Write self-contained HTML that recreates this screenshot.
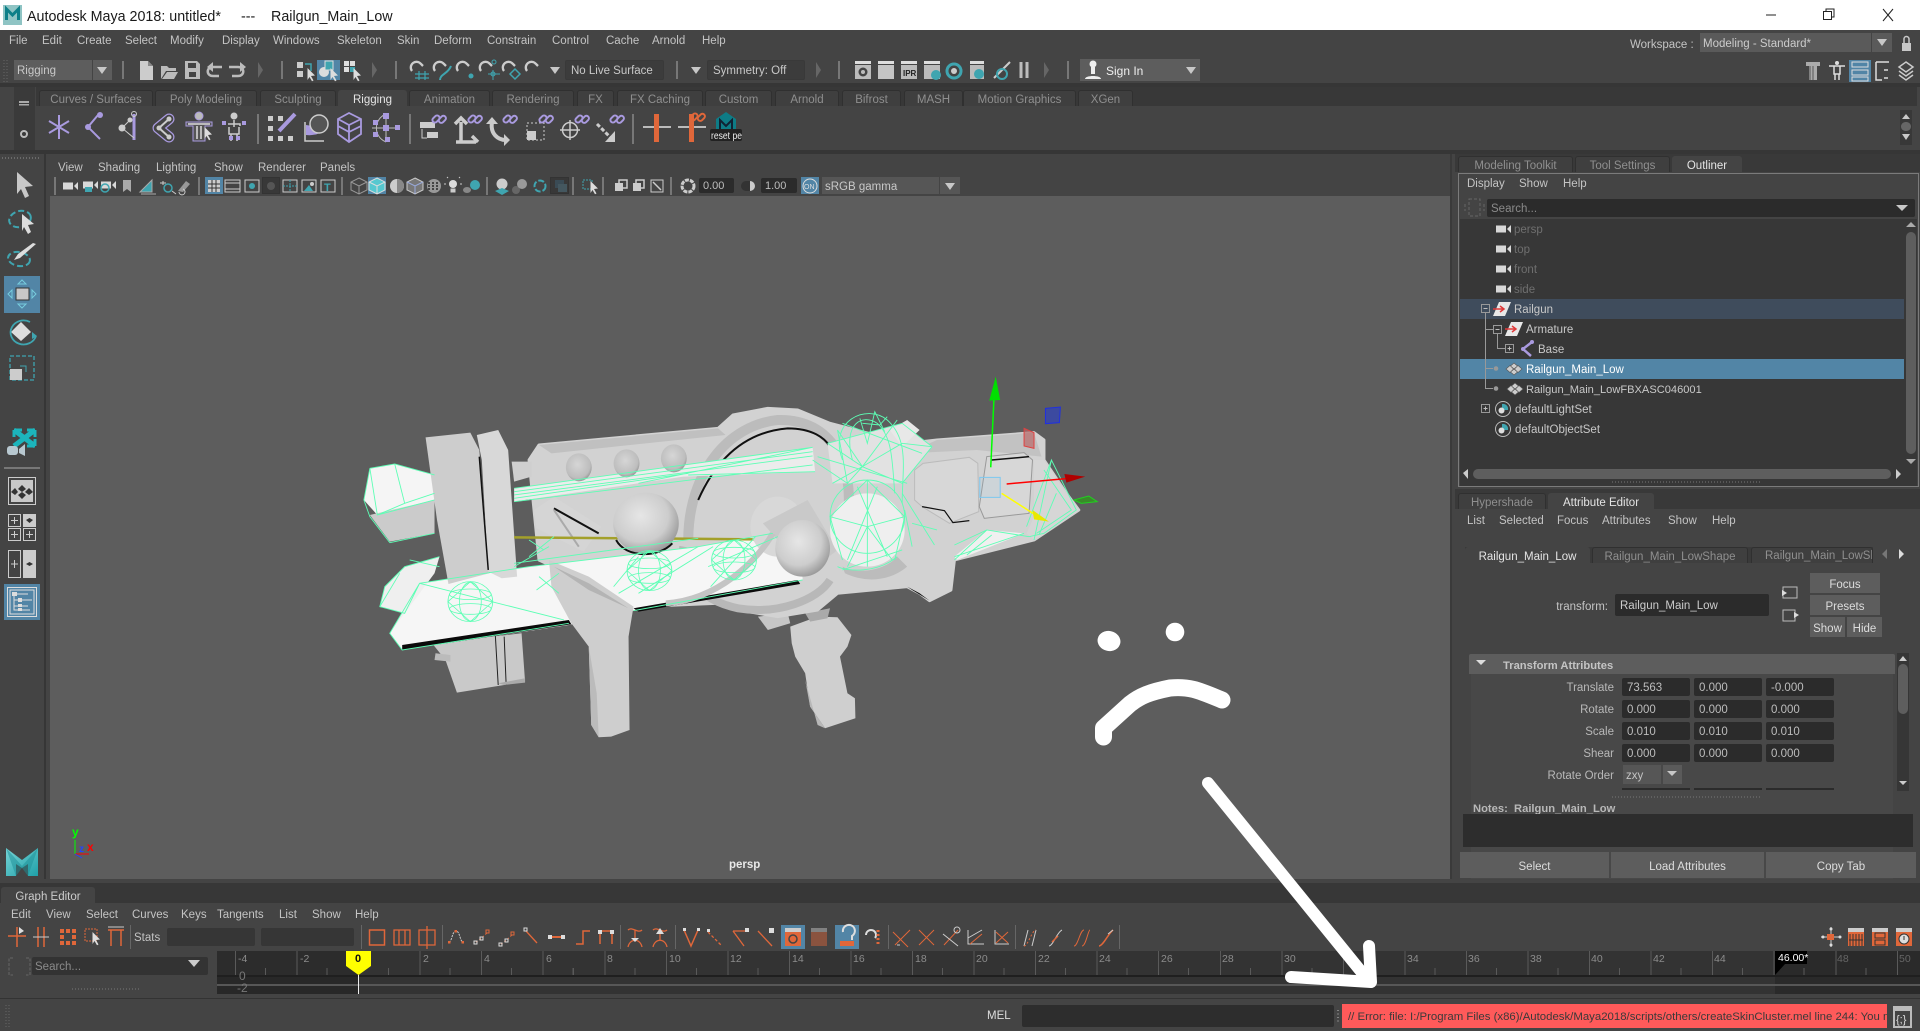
<!DOCTYPE html>
<html><head><meta charset="utf-8"><title>Autodesk Maya 2018</title>
<style>
html,body{margin:0;padding:0;background:#444;}
#p{position:relative;width:1920px;height:1031px;overflow:hidden;background:#444;font-family:"Liberation Sans",Arial,sans-serif;font-size:11.5px;color:#c4c4c4;}
#p div{position:absolute;box-sizing:border-box;}
.t{position:absolute;white-space:nowrap;line-height:14px;height:14px;margin-top:1px;}
.c{display:flex;align-items:center;justify-content:center;white-space:nowrap;padding-top:2px;}
.tab{background:#3f3f3f;color:#8f8f8f;border:1px solid #303030;border-bottom:0;border-radius:3px 3px 0 0;}
.on{background:#444;color:#e4e4e4;border-color:#444;}
.f{background:#2b2b2b;border-radius:2px;padding-left:5px;padding-top:1px;line-height:17px;color:#bdbdbd;}
.b{background:#5d5d5d;color:#ddd;}
.b.c{padding-top:3px;}
.r{text-align:right;color:#b8b8b8;}
svg{position:absolute;left:0;top:0;}
.gun *{vector-effect:non-scaling-stroke;}
</style></head><body><div id="p">

<!-- title bar -->
<div style="left:0;top:0;width:1920px;height:30px;background:#fff"></div>
<div style="left:3px;top:5px;width:19px;height:20px;background:#8fc4c4"></div>
<span class="t" style="left:27px;top:9px;font-size:14.3px;color:#1a1a1a">Autodesk Maya 2018: untitled*</span>
<span class="t" style="left:241px;top:9px;font-size:14.3px;color:#1a1a1a">---</span>
<span class="t" style="left:271px;top:9px;font-size:14.3px;color:#1a1a1a">Railgun_Main_Low</span>

<!-- menu -->
<span class="t" style="left:9px;top:33px">File</span><span class="t" style="left:42px;top:33px">Edit</span><span class="t" style="left:77px;top:33px">Create</span><span class="t" style="left:125px;top:33px">Select</span><span class="t" style="left:170px;top:33px">Modify</span><span class="t" style="left:222px;top:33px">Display</span><span class="t" style="left:273px;top:33px">Windows</span><span class="t" style="left:337px;top:33px">Skeleton</span><span class="t" style="left:397px;top:33px">Skin</span><span class="t" style="left:434px;top:33px">Deform</span><span class="t" style="left:487px;top:33px">Constrain</span><span class="t" style="left:552px;top:33px">Control</span><span class="t" style="left:606px;top:33px">Cache</span><span class="t" style="left:652px;top:33px">Arnold</span><span class="t" style="left:702px;top:33px">Help</span>
<span class="t" style="left:1630px;top:37px">Workspace :</span>
<div style="left:1700px;top:33px;width:171px;height:19px;background:#5a5a5a;padding-left:3px;line-height:23px;color:#ccc;white-space:nowrap">Modeling - Standard*</div>
<div style="left:1872px;top:33px;width:20px;height:19px;background:#5a5a5a"></div>

<!-- status line -->
<div style="left:14px;top:60px;width:78px;height:20px;background:#5d5d5d;padding-left:3px;line-height:22px;color:#c8c8c8">Rigging</div>
<div style="left:93px;top:60px;width:19px;height:20px;background:#5d5d5d"></div>
<div style="left:317px;top:60px;width:23px;height:20px;background:#5285a6"></div>
<div class="f" style="left:565px;top:60px;width:99px;height:20px;background:#3c3c3c;border:1px solid #393939;line-height:18px;color:#c8c8c8;white-space:nowrap">No Live Surface</div>
<div class="f" style="left:707px;top:60px;width:98px;height:20px;background:#3c3c3c;border:1px solid #393939;line-height:18px;color:#c8c8c8;white-space:nowrap">Symmetry: Off</div>
<div style="left:1080px;top:59px;width:120px;height:22px;background:#5d5d5d"></div>
<span class="t" style="left:1106px;top:63px;color:#eee;font-size:12px">Sign In</span>
<div style="left:1849px;top:60px;width:22px;height:22px;background:#5285a6"></div>

<!-- shelf -->
<div style="left:0;top:83px;width:1920px;height:4px;background:#363636"></div>
<div style="left:36px;top:87px;width:1881px;height:19px;background:#383838"></div>
<div style="left:14px;top:87px;width:21px;height:63px;background:#3a3a3a"></div>
<div style="left:1917px;top:87px;width:3px;height:63px;background:#444"></div>
<div class="tab c" style="left:39px;top:90px;width:114px;height:16px">Curves / Surfaces</div>
<div class="tab c" style="left:155px;top:90px;width:102px;height:16px">Poly Modeling</div>
<div class="tab c" style="left:260px;top:90px;width:76px;height:16px">Sculpting</div>
<div class="tab on c" style="left:338px;top:90px;width:69px;height:16px">Rigging</div>
<div class="tab c" style="left:409px;top:90px;width:81px;height:16px">Animation</div>
<div class="tab c" style="left:492px;top:90px;width:82px;height:16px">Rendering</div>
<div class="tab c" style="left:577px;top:90px;width:37px;height:16px">FX</div>
<div class="tab c" style="left:617px;top:90px;width:86px;height:16px">FX Caching</div>
<div class="tab c" style="left:705px;top:90px;width:67px;height:16px">Custom</div>
<div class="tab c" style="left:775px;top:90px;width:64px;height:16px">Arnold</div>
<div class="tab c" style="left:842px;top:90px;width:59px;height:16px">Bifrost</div>
<div class="tab c" style="left:904px;top:90px;width:59px;height:16px">MASH</div>
<div class="tab c" style="left:963px;top:90px;width:113px;height:16px">Motion Graphics</div>
<div class="tab c" style="left:1078px;top:90px;width:55px;height:16px">XGen</div>
<div style="left:1900px;top:110px;width:12px;height:35px;background:#383838"></div>
<div style="left:0;top:150px;width:1920px;height:4px;background:#363636"></div>

<!-- left toolbox -->
<div style="left:44px;top:154px;width:2px;height:730px;background:#363636"></div>
<div style="left:4px;top:276px;width:36px;height:37px;background:#5285a6"></div>
<div style="left:4px;top:467px;width:36px;height:2px;background:#777"></div>
<div style="left:4px;top:584px;width:36px;height:36px;background:#5285a6"></div>

<!-- viewport panel -->
<span class="t" style="left:58px;top:160px">View</span><span class="t" style="left:98px;top:160px">Shading</span><span class="t" style="left:156px;top:160px">Lighting</span><span class="t" style="left:214px;top:160px">Show</span><span class="t" style="left:258px;top:160px">Renderer</span><span class="t" style="left:320px;top:160px">Panels</span>
<div style="left:205px;top:177px;width:18px;height:17px;background:#5285a6"></div>
<div style="left:262px;top:177px;width:18px;height:17px;background:#383838;border:1px solid #333"></div>
<div style="left:368px;top:177px;width:18px;height:17px;background:#5285a6"></div>
<div style="left:550px;top:177px;width:19px;height:17px;background:#383838;border:1px solid #333"></div>
<div class="f" style="left:699px;top:178px;width:35px;height:15px;line-height:15px;padding-left:4px;font-size:11px">0.00</div>
<div class="f" style="left:761px;top:178px;width:36px;height:15px;line-height:15px;padding-left:4px;font-size:11px">1.00</div>
<div style="left:801px;top:177px;width:18px;height:17px;background:#5285a6"></div>
<div style="left:822px;top:177px;width:117px;height:17px;background:#565656;padding-left:3px;line-height:20px;color:#c8c8c8">sRGB gamma</div>
<div style="left:940px;top:177px;width:20px;height:17px;background:#565656"></div>
<div style="left:50px;top:196px;width:1400px;height:683px;background:#5d5d5d"></div>
<div style="left:1450px;top:154px;width:2px;height:730px;background:#3a3a3a"></div>
<span class="t" style="left:729px;top:857px;color:#e8e8e8;font-weight:bold;font-size:11.5px">persp</span>

<!-- right panels -->
<div style="left:1455px;top:154px;width:465px;height:18px;background:#393939"></div>
<div class="tab c" style="left:1458px;top:156px;width:115px;height:16px">Modeling Toolkit</div>
<div class="tab c" style="left:1575px;top:156px;width:95px;height:16px">Tool Settings</div>
<div class="tab on c" style="left:1672px;top:156px;width:70px;height:17px">Outliner</div>
<div style="left:1458px;top:173px;width:461px;height:314px;border:1px solid #7b7b7b"></div>
<span class="t" style="left:1467px;top:176px">Display</span><span class="t" style="left:1519px;top:176px">Show</span><span class="t" style="left:1563px;top:176px">Help</span>
<div style="left:1487px;top:199px;width:428px;height:18px;background:#2b2b2b;border-radius:2px;color:#8a8a8a;padding-left:4px;line-height:20px">Search...</div>
<div style="left:1460px;top:219px;width:457px;height:267px;background:#373737"></div>
<div style="left:1460px;top:299px;width:444px;height:20px;background:#3f4c5c"></div>
<div style="left:1460px;top:359px;width:444px;height:20px;background:#5285a6"></div>
<div style="left:1906px;top:232px;width:10px;height:222px;background:#5e5e5e;border-radius:5px"></div>
<div style="left:1473px;top:469px;width:418px;height:10px;background:#5e5e5e;border-radius:5px"></div>
<span class="t" style="left:1514px;top:222px;color:#6f6f6f">persp</span>
<span class="t" style="left:1514px;top:242px;color:#6f6f6f">top</span>
<span class="t" style="left:1514px;top:262px;color:#6f6f6f">front</span>
<span class="t" style="left:1514px;top:282px;color:#6f6f6f">side</span>
<span class="t" style="left:1514px;top:302px;color:#c8c8c8">Railgun</span>
<span class="t" style="left:1526px;top:322px;color:#c8c8c8">Armature</span>
<span class="t" style="left:1538px;top:342px;color:#c8c8c8">Base</span>
<span class="t" style="left:1526px;top:362px;color:#fff">Railgun_Main_Low</span>
<span class="t" style="left:1526px;top:382px;color:#c8c8c8;font-size:11.1px">Railgun_Main_LowFBXASC046001</span>
<span class="t" style="left:1515px;top:402px;color:#c8c8c8">defaultLightSet</span>
<span class="t" style="left:1515px;top:422px;color:#c8c8c8">defaultObjectSet</span>

<div style="left:1455px;top:489px;width:465px;height:20px;background:#393939"></div>
<div class="tab c" style="left:1458px;top:493px;width:88px;height:16px">Hypershade</div>
<div class="tab on c" style="left:1548px;top:493px;width:106px;height:17px">Attribute Editor</div>
<span class="t" style="left:1467px;top:513px">List</span><span class="t" style="left:1499px;top:513px">Selected</span><span class="t" style="left:1557px;top:513px">Focus</span><span class="t" style="left:1602px;top:513px">Attributes</span><span class="t" style="left:1668px;top:513px">Show</span><span class="t" style="left:1712px;top:513px">Help</span>
<div style="left:1465px;top:547px;width:408px;height:16px;background:#3a3a3a"></div>
<div class="tab on c" style="left:1465px;top:547px;width:125px;height:17px">Railgun_Main_Low</div>
<div class="tab c" style="left:1592px;top:547px;width:156px;height:16px">Railgun_Main_LowShape</div>
<div class="tab" style="left:1751px;top:547px;width:122px;height:16px;overflow:hidden;padding-left:13px;line-height:17px;white-space:nowrap">Railgun_Main_LowShape</div>
<span class="t r" style="left:1540px;width:68px;top:599px;color:#c4c4c4">transform:</span>
<div class="f" style="left:1615px;top:594px;width:154px;height:22px;line-height:22px;color:#ccc">Railgun_Main_Low</div>
<div class="b c" style="left:1810px;top:573px;width:70px;height:20px">Focus</div>
<div class="b c" style="left:1810px;top:595px;width:70px;height:20px">Presets</div>
<div class="b c" style="left:1810px;top:617px;width:35px;height:20px">Show</div>
<div class="b c" style="left:1847px;top:617px;width:35px;height:20px">Hide</div>
<div style="left:1469px;top:654px;width:426px;height:20px;background:#5d5d5d;border-radius:2px 2px 0 0"></div>
<span class="t" style="left:1503px;top:658px;font-weight:bold;color:#c4c4c4;font-size:11.2px">Transform Attributes</span>
<div style="left:1471px;top:674px;width:422px;height:227px;background:#484848"></div>
<span class="t r" style="left:1540px;width:74px;top:680px">Translate</span>
<span class="t r" style="left:1540px;width:74px;top:702px">Rotate</span>
<span class="t r" style="left:1540px;width:74px;top:724px">Scale</span>
<span class="t r" style="left:1540px;width:74px;top:746px">Shear</span>
<span class="t r" style="left:1540px;width:74px;top:768px">Rotate Order</span>
<div class="f" style="left:1622px;top:678px;width:68px;height:18px;line-height:19px">73.563</div><div class="f" style="left:1694px;top:678px;width:68px;height:18px;line-height:19px">0.000</div><div class="f" style="left:1766px;top:678px;width:68px;height:18px;line-height:19px">-0.000</div>
<div class="f" style="left:1622px;top:700px;width:68px;height:18px;line-height:19px">0.000</div><div class="f" style="left:1694px;top:700px;width:68px;height:18px;line-height:19px">0.000</div><div class="f" style="left:1766px;top:700px;width:68px;height:18px;line-height:19px">0.000</div>
<div class="f" style="left:1622px;top:722px;width:68px;height:18px;line-height:19px">0.010</div><div class="f" style="left:1694px;top:722px;width:68px;height:18px;line-height:19px">0.010</div><div class="f" style="left:1766px;top:722px;width:68px;height:18px;line-height:19px">0.010</div>
<div class="f" style="left:1622px;top:744px;width:68px;height:18px;line-height:19px">0.000</div><div class="f" style="left:1694px;top:744px;width:68px;height:18px;line-height:19px">0.000</div><div class="f" style="left:1766px;top:744px;width:68px;height:18px;line-height:19px">0.000</div>
<div style="left:1623px;top:765px;width:38px;height:19px;background:#565656;padding-left:3px;line-height:23px">zxy</div>
<div style="left:1663px;top:765px;width:19px;height:19px;background:#5a5a5a"></div>
<div style="left:1622px;top:788px;width:68px;height:2px;background:#2b2b2b"></div><div style="left:1694px;top:788px;width:68px;height:2px;background:#2b2b2b"></div><div style="left:1766px;top:788px;width:68px;height:2px;background:#2b2b2b"></div>
<div style="left:1897px;top:653px;width:12px;height:138px;background:#363636"></div>
<div style="left:1898px;top:664px;width:10px;height:50px;background:#5e5e5e;border-radius:5px"></div>
<span class="t" style="left:1473px;top:801px;font-weight:bold;color:#b8b8b8;font-size:11.2px">Notes:&nbsp; Railgun_Main_Low</span>
<div style="left:1463px;top:814px;width:450px;height:33px;background:#2d2d2d"></div>
<div class="b c" style="left:1460px;top:852px;width:149px;height:26px">Select</div>
<div class="b c" style="left:1611px;top:852px;width:153px;height:26px">Load Attributes</div>
<div class="b c" style="left:1766px;top:852px;width:150px;height:26px">Copy Tab</div>

<!-- graph editor -->
<div style="left:0;top:879px;width:1920px;height:4px;background:#444"></div>
<div style="left:0;top:883px;width:1920px;height:20px;background:#373737"></div>
<div class="tab on c" style="left:1px;top:887px;width:94px;height:17px;color:#ccc">Graph Editor</div>
<span class="t" style="left:11px;top:907px">Edit</span><span class="t" style="left:46px;top:907px">View</span><span class="t" style="left:86px;top:907px">Select</span><span class="t" style="left:132px;top:907px">Curves</span><span class="t" style="left:181px;top:907px">Keys</span><span class="t" style="left:217px;top:907px">Tangents</span><span class="t" style="left:279px;top:907px">List</span><span class="t" style="left:312px;top:907px">Show</span><span class="t" style="left:355px;top:907px">Help</span>
<span class="t" style="left:134px;top:930px">Stats</span>
<div style="left:167px;top:928px;width:88px;height:18px;background:#363636;border-radius:2px"></div>
<div style="left:261px;top:928px;width:93px;height:18px;background:#363636;border-radius:2px"></div>
<div style="left:781px;top:925px;width:24px;height:24px;background:#5285a6"></div>
<div style="left:835px;top:925px;width:24px;height:24px;background:#5285a6"></div>
<div style="left:32px;top:957px;width:176px;height:18px;background:#333;border-radius:2px;color:#8a8a8a;padding-left:3px;line-height:20px">Search...</div>

<!-- time slider -->
<div style="left:217px;top:951px;width:1703px;height:43px;background:#333"></div>
<div style="left:217px;top:951px;width:141px;height:24px;background:#2c2c2c"></div>
<div style="left:217px;top:977px;width:141px;height:17px;background:#282828"></div>
<div style="left:1775px;top:951px;width:145px;height:43px;background:#2a2a2a"></div>
<div style="left:235px;top:951px;width:1685px;height:24px;background:repeating-linear-gradient(90deg,#5a5a5a 0 1px,transparent 1px 61.55px)"></div>
<div style="left:265px;top:968px;width:1655px;height:7px;background:repeating-linear-gradient(90deg,#5a5a5a 0 1px,transparent 1px 61.55px)"></div>
<div style="left:217px;top:975px;width:1703px;height:2px;background:#1f1f1f"></div>
<div style="left:217px;top:984px;width:1703px;height:2px;background:#575757"></div>
<div style="left:0;top:994px;width:1920px;height:5px;background:#444"></div>
<div style="left:0;top:998px;width:1920px;height:1px;background:#333"></div>
<div style="left:1775px;top:951px;width:32px;height:13px;background:#000;color:#fff;font-size:10.5px;line-height:15px;padding-left:3px;white-space:nowrap">46.00*</div>

<!-- command line -->
<span class="t" style="left:987px;top:1008px;color:#ddd">MEL</span>
<div style="left:1022px;top:1005px;width:312px;height:22px;background:#2d2d2d;border-radius:2px"></div>
<div style="left:1342px;top:1004px;width:545px;height:24px;background:#ff5a5a;overflow:hidden;color:#3a3a3a;font-size:11.4px;line-height:26px;padding-left:6px;white-space:nowrap">// Error: file: I:/Program Files (x86)/Autodesk/Maya2018/scripts/others/createSkinCluster.mel line 244: You must select a skin</div>

<!-- ALL ICONS + VIEWPORT CONTENT -->
<svg width="1920" height="1031" viewBox="0 0 1920 1031" font-family="'Liberation Sans',Arial,sans-serif">
<defs>
<radialGradient id="sph" cx=".42" cy=".38" r=".7"><stop offset="0" stop-color="#e6e6e6"/><stop offset=".6" stop-color="#cdcdcd"/><stop offset="1" stop-color="#8c8c8c"/></radialGradient>
<radialGradient id="knob" cx=".45" cy=".4" r=".7"><stop offset="0" stop-color="#d6d6d6"/><stop offset=".7" stop-color="#bdbdbd"/><stop offset="1" stop-color="#7a7a7a"/></radialGradient>
<linearGradient id="mlogo" x1="0" y1="0" x2="1" y2="1"><stop offset="0" stop-color="#78d4d6"/><stop offset="1" stop-color="#1fa0a8"/></linearGradient>
<g id="sep"><rect x="-1" y="-9" width="2" height="18" fill="#777"/></g>
<g id="hs"><path d="M-2,-8L3,0L-2,8Z" fill="#666"/></g>
<g id="tri"><path d="M-5,-3H5L0,4Z" fill="#c8c8c8"/></g>
<g id="arr"><path d="M-2.500,-6L5,1.500L1,2L3.500,6.500L2,7.300L-.5,3L-2.500,6Z" fill="#ddd"/></g>
<g id="link"><rect x="-7" y="-3.500" width="8" height="5" rx="2.500" transform="rotate(-45 -3 -1)" fill="none" stroke="#a99adf" stroke-width="2"/><rect x="-1" y="-3" width="8" height="5" rx="2.500" transform="rotate(-45 3 -1)" fill="none" stroke="#a99adf" stroke-width="2"/></g>
<g id="cam"><rect x="-7" y="-3.500" width="10" height="7" fill="#d8d8d8"/><path d="M4,0L8,-4V4Z" fill="#d8d8d8"/></g>
<g id="mesh"><path d="M0,-6L3.500,-3L0,0L-3.500,-3ZM0,0L3.500,3L0,6L-3.500,3ZM-4,-3.500L-.5,0L-4,3.500L-8,0ZM4,-3.500L8,0L4,3.500L.5,0Z" fill="#ccc" stroke="#555" stroke-width=".6"/></g>
<g id="xf"><path d="M-3,-7H9L3,7H-9Z" fill="#e8e8e8"/><path d="M-9,0H2M-2,-3L2,0L-2,3" stroke="#e03a3a" stroke-width="1.500" fill="none"/></g>
<g id="set"><circle r="7.500" fill="none" stroke="#bbb" stroke-width="1"/><path d="M-1,-5A5,5 0 0 1 5,1H-1Z" fill="#3fa5b0"/><circle cx="-1.500" cy="1.500" r="3" fill="#ddd"/></g>
<g id="box"><rect x="-4" y="-4" width="8" height="8" fill="none" stroke="#999"/><path d="M-2,0H2" stroke="#bbb"/></g>
<g id="boxp"><rect x="-4" y="-4" width="8" height="8" fill="none" stroke="#999"/><path d="M-2,0H2M0,-2V2" stroke="#bbb"/></g>
<g id="snap"><path d="M-6,3A5.500,5.500 0 1 1 3,-4L5,-2" stroke="#ccc" stroke-width="2.300" fill="none"/></g>
<g id="ot2"><path d="M-7,5C-4,5-4,-6,0,-6S4,5,7,5" stroke="#ccc" stroke-width="1" stroke-dasharray="2 1" fill="none"/><rect x="-8" y="4" width="2.500" height="2.500" fill="#e0673a"/><rect x="5.500" y="4" width="2.500" height="2.500" fill="#e0673a"/><rect x="-1.500" y="-7" width="2.500" height="2.500" fill="#e0673a"/></g>
<g id="ot3"><path d="M-6,5L-1,1.500L6,-5" stroke="#e0673a" stroke-width="1" stroke-dasharray="2 2" fill="none"/><rect x="-8" y="4" width="3" height="3" fill="none" stroke="#ddd"/><rect x="-2" y="0" width="3" height="3" fill="none" stroke="#ddd"/><rect x="4" y="-7" width="3" height="3" fill="none" stroke="#e0673a"/></g>
<g id="wsq"><rect x="-8" y="-9" width="16" height="18" fill="#e0673a"/><rect x="-8" y="-9" width="16" height="4" fill="#ccc"/></g>
</defs>

<!-- window controls -->
<path d="M1766,15H1776" stroke="#222" stroke-width="1"/>
<path d="M1823.500,11.500H1831.500V19.500H1823.500ZM1826,11V9H1834V17H1832" stroke="#222" fill="none"/>
<path d="M1883,9L1893,21M1893,9L1883,21" stroke="#222" fill="none"/>
<path d="M6.500,20V9L12.500,15L18.500,9V20" stroke="#0d7f88" stroke-width="3" fill="none"/>

<!-- workspace arrow / lock -->
<use href="#tri" x="1882" y="42"/>
<rect x="1902" y="43" width="9" height="8" fill="#c8c8c8"/><path d="M1904,43V39A2.500,2.500 0 0 1 1909,39V43" stroke="#c8c8c8" stroke-width="1.500" fill="none"/>
<!-- status line handles -->
<path d="M4,60V82M7,60V82" stroke="#666" stroke-dasharray="1 2"/>
<use href="#tri" x="102" y="70"/>
<use href="#sep" x="123" y="70"/>
<path d="M140,61H148L153,66V80H140Z" fill="#ccc"/><path d="M148,61V66H153" fill="#888"/>
<path d="M161,66H167L169,68H176V71H166L161,79ZM162,79L167,72H178L174,79Z" fill="#bbb"/>
<path d="M185,61H197L200,64V79H185Z" fill="#bbb"/><rect x="188" y="63" width="8" height="5" fill="#444"/><rect x="189" y="72" width="7" height="5" fill="#444"/>
<path d="M219,76H213C206,76 206,67 213,67H222" stroke="#bbb" stroke-width="2.500" fill="none"/><path d="M213,62L207,67L213,72Z" fill="#bbb"/>
<path d="M232,76H238C245,76 245,67 238,67H229" stroke="#bbb" stroke-width="2.500" fill="none"/><path d="M240,62L246,67L240,72Z" fill="#bbb"/>
<use href="#hs" x="260" y="70"/><use href="#sep" x="282" y="70"/>
<g fill="#ccc"><rect x="297" y="62" width="6" height="6"/><rect x="297" y="71" width="6" height="6"/></g><path d="M305,64H311V71" stroke="#3fa5b0" stroke-width="1.500" fill="none"/><use href="#arr" x="310" y="74"/>
<circle cx="324" cy="72" r="5" fill="#ddd"/><rect x="325" y="61" width="8" height="9" fill="#3fa5b0" stroke="#ddd"/><use href="#arr" x="333" y="74"/>
<g fill="#ddd"><rect x="344" y="61" width="5" height="5"/><rect x="350" y="61" width="5" height="5"/><rect x="344" y="67" width="5" height="5"/></g><rect x="350" y="67" width="5" height="5" fill="#3fa5b0"/><use href="#arr" x="356" y="74"/>
<use href="#hs" x="374" y="70"/><use href="#sep" x="396" y="70"/>
<use href="#snap" x="418" y="68"/><path d="M419,71V80M425,71V80M415,74H429M415,78H429" stroke="#3fa5b0" stroke-width="1.200"/>
<use href="#snap" x="441" y="68"/><path d="M440,80C440,74 448,74 451,66" stroke="#3fa5b0" stroke-width="2" fill="none"/>
<use href="#snap" x="464" y="68"/><circle cx="471" cy="76" r="2.500" fill="#3fa5b0"/>
<use href="#snap" x="487" y="68"/><circle cx="494" cy="62" r="2" fill="none" stroke="#3fa5b0"/><circle cx="493" cy="74" r="2" fill="none" stroke="#3fa5b0"/><path d="M493,70V80M488,74H500" stroke="#3fa5b0"/>
<use href="#snap" x="510" y="68"/><path d="M510,74L515,69L520,74L515,79Z" fill="none" stroke="#3fa5b0" stroke-width="1.500"/>
<use href="#snap" x="533" y="68"/>
<use href="#tri" x="555" y="70"/><use href="#sep" x="677" y="70"/><use href="#tri" x="696" y="70"/><use href="#hs" x="818" y="70"/><use href="#sep" x="839" y="70"/>
<g><rect x="855" y="61" width="16" height="3" fill="#ddd"/><rect x="855" y="65" width="16" height="14" fill="#bbb"/><circle cx="863" cy="72" r="4.500" fill="#444"/><circle cx="863" cy="72" r="2" fill="#bbb"/></g>
<g><rect x="878" y="61" width="16" height="3" fill="#ddd"/><rect x="878" y="65" width="16" height="14" fill="#c4c4c4"/></g>
<g><rect x="901" y="61" width="16" height="3" fill="#ddd"/><rect x="901" y="65" width="16" height="14" fill="#bbb"/><text x="903" y="76" font-size="8" fill="#222" font-weight="bold">IPR</text></g>
<g><rect x="924" y="61" width="16" height="3" fill="#ddd"/><rect x="924" y="65" width="16" height="14" fill="#bbb"/><circle cx="936" cy="75" r="5" fill="#3fa5b0"/></g>
<circle cx="954" cy="71" r="7" fill="none" stroke="#3fa5b0" stroke-width="3"/><circle cx="954" cy="71" r="3" fill="#ccc"/>
<g><rect x="970" y="61" width="14" height="3" fill="#ddd"/><rect x="970" y="65" width="14" height="14" fill="#bbb"/><circle cx="979" cy="74" r="5" fill="#3fa5b0"/></g>
<path d="M994,78L1010,62" stroke="#ccc" stroke-width="2"/><circle cx="1002" cy="74" r="5" fill="none" stroke="#3fa5b0" stroke-width="2"/>
<path d="M1021,62V78M1027,62V78" stroke="#bbb" stroke-width="3"/>
<use href="#hs" x="1046" y="70"/><use href="#sep" x="1068" y="70"/>
<circle cx="1093" cy="64" r="3.500" fill="#eee"/><path d="M1091,67H1095V74H1091ZM1085,79C1085,75 1101,75 1101,79Z" fill="#eee"/>
<use href="#tri" x="1191" y="70"/>
<!-- right layout icons -->
<path d="M1806,62H1820V66H1817V80H1809V66H1806Z" fill="#aaa"/><path d="M1810,66V80M1813,66V80" stroke="#555"/>
<circle cx="1837" cy="63" r="2" fill="#ddd"/><path d="M1829,66H1845M1834,66H1840V74H1834ZM1835,74V80M1839,74V80" stroke="#ddd" stroke-width="1.500" fill="none"/>
<path d="M1852,62H1868V67H1852ZM1852,70H1868V75H1852ZM1852,77H1868V81H1852Z" fill="none" stroke="#ddd"/>
<path d="M1876,62H1889M1876,62V80H1882M1884,70H1888M1884,78H1888" stroke="#ddd" stroke-width="1.500" fill="none"/>
<path d="M1906,62L1913,67L1906,72L1899,67ZM1899,71L1906,76L1913,71M1899,75L1906,80L1913,75" fill="none" stroke="#ccc" stroke-width="1.500"/>

<!-- shelf -->
<rect x="19" y="101" width="10" height="2" fill="#aaa"/><rect x="19" y="104" width="10" height="1.500" fill="#aaa"/>
<circle cx="24" cy="134" r="3" fill="none" stroke="#bbb" stroke-width="2"/>
<path d="M1906,114L1902,119H1910ZM1906,140L1902,134H1910Z" fill="#c8c8c8"/><rect x="1901" y="122" width="10" height="9" rx="4.500" fill="#666"/>
<path d="M59,115V139M49,121L69,133M69,121L49,133" stroke="#a99adf" stroke-width="2"/>
<g fill="#a99adf"><circle cx="100" cy="115" r="3"/><circle cx="88" cy="127" r="3"/><path d="M98,115L88,127L100,139" fill="none" stroke="#a99adf" stroke-width="2"/></g>
<g><path d="M134,114V140" stroke="#a99adf" stroke-width="3"/><circle cx="134" cy="114" r="2.500" fill="none" stroke="#ccc"/><circle cx="122" cy="128" r="3.500" fill="#ccc"/><circle cx="130" cy="120" r="2.500" fill="#ccc"/><path d="M122,128L130,120M122,128L134,138" stroke="#ccc"/></g>
<path d="M169,119L158,128L169,137" fill="none" stroke="#a99adf" stroke-width="11" stroke-linejoin="round" stroke-linecap="round"/><path d="M169,119L158,128L169,137" fill="none" stroke="#444" stroke-width="8.500" stroke-linejoin="round" stroke-linecap="round"/><path d="M169,119L159,128L169,137" fill="none" stroke="#ccc" stroke-width="2"/><circle cx="169" cy="119" r="2.500" fill="#ccc"/><circle cx="159" cy="128" r="2.500" fill="#ccc"/><circle cx="169" cy="137" r="2.500" fill="#ccc"/>
<circle cx="199" cy="116" r="4" fill="#bbb" stroke="#a99adf"/><path d="M186,122H212V126H205V141H193V126H186Z" fill="#555" stroke="#a99adf"/><path d="M188,124H210M197,126V139M201,126V139" stroke="#bbb" stroke-width="2"/><use href="#arr" x="207" y="133"/>
<circle cx="234" cy="116" r="3.500" fill="#ccc"/><path d="M234,120V127M228,124H240V126M229,127V134H239V127M231,134V141M237,134V141" fill="none" stroke="#ccc" stroke-width="1.500"/><rect x="222" y="121" width="4" height="4" fill="#a99adf"/><rect x="242" y="121" width="4" height="4" fill="#a99adf"/><rect x="229" y="136" width="4" height="4" fill="#a99adf"/><rect x="236" y="136" width="4" height="4" fill="#a99adf"/>
<rect x="257" y="114" width="2" height="30" fill="#777"/>
<g fill="#ccc"><rect x="268" y="116" width="5" height="5"/><rect x="278" y="116" width="5" height="5"/><rect x="268" y="126" width="5" height="5"/><rect x="268" y="136" width="5" height="5"/><rect x="278" y="136" width="5" height="5"/><rect x="288" y="136" width="5" height="5"/></g><path d="M279,131L295,114" stroke="#a99adf" stroke-width="4"/>
<path d="M305,122V141H324" fill="none" stroke="#ccc" stroke-width="1.500"/><path d="M306,125V135C315,136 322,133 325,128Z" fill="#a99adf"/><circle cx="319" cy="124" r="9" fill="#555" stroke="#ccc" stroke-width="1.500"/>
<path d="M349,113L338,119V134L349,142L361,134V119ZM338,119L349,125L361,119M349,125V142M338,126L349,132L361,126" fill="none" stroke="#a99adf" stroke-width="1.800"/>
<path d="M386,114A15,15 0 0 0 386,142" stroke="#bbb" fill="none"/><path d="M372,128H400M386,114V142" stroke="#bbb"/><g fill="#a99adf"><rect x="383" y="113" width="6" height="6"/><rect x="373" y="120" width="5" height="5"/><rect x="395" y="125" width="5" height="5"/><rect x="383" y="125" width="6" height="6"/><rect x="385" y="137" width="5" height="5"/><rect x="373" y="132" width="5" height="5"/></g>
<rect x="409" y="114" width="2" height="30" fill="#777"/>
<rect x="420" y="122" width="15" height="6" fill="#ccc"/><rect x="427" y="132" width="11" height="6" fill="#ccc"/><path d="M422,129V138H427" stroke="#ccc" fill="none"/><use href="#link" x="439" y="120"/>
<path d="M456,142H476M461,142V122M455,124L461,118L467,124M472,136L478,142" stroke="#ccc" stroke-width="3.500" fill="none"/><use href="#link" x="475" y="120"/>
<path d="M492,122C490,134 498,140 506,140" stroke="#ccc" stroke-width="4" fill="none"/><path d="M486,124L492,117L498,124ZM504,134L510,140L504,146Z" fill="#ccc"/><use href="#link" x="510" y="120"/>
<rect x="527" y="123" width="17" height="17" fill="none" stroke="#ccc" stroke-dasharray="2 2"/><rect x="527" y="131" width="9" height="9" fill="#ccc"/><use href="#link" x="546" y="120"/>
<circle cx="570" cy="130" r="7.500" fill="none" stroke="#ccc" stroke-width="1.500"/><path d="M560,130H580M570,120V140" stroke="#ccc" stroke-width="1.500"/><use href="#link" x="582" y="120"/>
<path d="M597,124L611,138" stroke="#ccc" stroke-width="3" stroke-dasharray="4 2"/><path d="M615,142L605,142L615,131Z" fill="#ccc"/><use href="#link" x="617" y="120"/>
<rect x="632" y="114" width="2" height="30" fill="#777"/>
<path d="M643,127H671" stroke="#bbb" stroke-width="2"/><rect x="654" y="114" width="5" height="28" fill="#e0673a"/>
<path d="M678,127H706" stroke="#bbb" stroke-width="2"/><rect x="689" y="114" width="5" height="28" fill="#e0673a"/><g transform="translate(698,118)"><rect x="-8" y="-3.500" width="8" height="5" rx="2.500" transform="rotate(-45 -4 -1)" fill="none" stroke="#e0673a" stroke-width="2"/><rect x="-1" y="-3" width="8" height="5" rx="2.500" transform="rotate(-45 3 -1)" fill="none" stroke="#e0673a" stroke-width="2"/></g>
<path d="M726,112L736,119V130H716V119Z" fill="#0e7c86"/><path d="M720,129V120L726,126L732,120V129" stroke="#123" stroke-width="2" fill="none"/>
<rect x="710" y="129" width="32" height="12" rx="2" fill="#222"/><text x="711" y="139" font-size="10" fill="#eee" textLength="31" lengthAdjust="spacingAndGlyphs">reset pe</text>

<!-- toolbox -->
<path d="M2,158H40" stroke="#777" stroke-dasharray="1 2" stroke-width="1.500"/>
<path d="M17,172L33,186L25,187L29,196L25,198L21,189L17,194Z" fill="#c8c8c8"/>
<ellipse cx="20" cy="219" rx="11" ry="8" transform="rotate(-15 20 219)" fill="none" stroke="#3fa5b0" stroke-width="2" stroke-dasharray="6 3"/><path d="M22,214L34,224L28,225L31,232L28,234L24,227L22,231Z" fill="#ddd"/>
<ellipse cx="19" cy="259" rx="11" ry="7" transform="rotate(10 19 259)" fill="none" stroke="#3fa5b0" stroke-width="2" stroke-dasharray="6 3"/><path d="M36,244L20,258L14,260L18,254L33,243Z" fill="#ddd"/>
<rect x="16" y="288" width="13" height="12" fill="#c8c8c8" stroke="#333"/><path d="M18,284L22,280L26,284ZM18,304H26L22,308ZM12,290V298L8,294ZM32,290V298L36,294Z" fill="none" stroke="#7cd" stroke-width="1"/>
<path d="M21,322L31,332L21,341L11,332Z" fill="#ddd"/><path d="M36,336A13,12 0 1 1 30,322" fill="none" stroke="#3fa5b0" stroke-width="1.800"/><path d="M32,332L37,336L32,339Z" fill="#3fa5b0"/>
<rect x="10" y="356" width="24" height="24" fill="none" stroke="#3fa5b0" stroke-width="1.300" stroke-dasharray="4 2"/><rect x="10" y="369" width="12" height="11" fill="#ccc"/><path d="M20,366H26V372" fill="none" stroke="#3fa5b0"/>
<path d="M14,430L35,446M35,430L14,446" stroke="#1cb5bc" stroke-width="5"/><path d="M14,430H22M14,430V437M35,430H27M35,430V437M35,446H27M35,446V439" stroke="#1cb5bc" stroke-width="3"/><rect x="7" y="446" width="11" height="9" rx="3" fill="#b8c8d0"/><path d="M19,449L25,444V456L19,453Z" fill="#b8c8d0"/>
<rect x="8.500" y="477.500" width="27" height="27" fill="none" stroke="#ccc"/><rect x="11" y="480" width="22" height="22" fill="#c8c8c8"/><path d="M22,485L26,489L22,492L18,489ZM22,492L26,495L22,499L18,495ZM15,488L18,492L15,495L11,492ZM29,488L33,492L29,495L25,492Z" fill="#333"/>
<g fill="none" stroke="#ccc"><rect x="8.500" y="514.500" width="12" height="12"/><rect x="8.500" y="528.500" width="12" height="12"/><rect x="23.500" y="528.500" width="12" height="12"/><path d="M11,520.500H18M14.500,517V524M11,534.500H18M14.500,531V538M26,534.500H33M29.500,531V538"/></g><rect x="23" y="514" width="13" height="13" fill="#ccc"/><path d="M26,520L29.500,518L33,520L29.500,523Z" fill="#333"/>
<rect x="8.500" y="550.500" width="12" height="27" fill="none" stroke="#ccc"/><path d="M11,564H18M14.500,560V568" stroke="#ccc"/><rect x="23" y="550" width="13" height="28" fill="#ccc"/><path d="M26,564L29.500,562L33,564L29.500,566Z" fill="#333"/>
<rect x="7.500" y="587.500" width="29" height="29" fill="none" stroke="#ddd"/><rect x="10" y="590" width="24" height="24" fill="none" stroke="#ddd"/><g fill="#ddd"><rect x="12" y="592" width="5" height="4"/><rect x="18" y="598" width="4" height="4"/><rect x="18" y="604" width="4" height="3"/><rect x="18" y="608" width="4" height="3"/></g><path d="M17,594H28M22,600H32M22,606H28M22,610H30M14,596V610H18M14,600H18M14,606H18" stroke="#ddd" fill="none"/>

<!-- viewport toolbar -->
<use href="#sep" x="55" y="186"/>
<use href="#cam" x="70" y="186"/>
<use href="#cam" x="90" y="185"/><rect x="85" y="187" width="7" height="5" fill="#3fa5b0"/>
<use href="#cam" x="108" y="185"/><circle cx="105" cy="188" r="4" fill="none" stroke="#3fa5b0" stroke-width="1.500"/>
<path d="M123,180H131V192L127,189L123,192Z" fill="#aaa"/>
<path d="M140,192L152,180V192Z" fill="#3fa5b0" stroke="#aaa"/><path d="M141,194H156" stroke="#aaa"/>
<circle cx="168" cy="188" r="4" fill="none" stroke="#3fa5b0" stroke-width="1.500"/><path d="M163,181V185M160,183H166M172,191L176,194" stroke="#ccc"/>
<path d="M178,191L186,181L190,184L183,192Z" fill="#999"/><path d="M179,192A3,3 0 1 0 183,189" fill="none" stroke="#ccc"/>
<use href="#sep" x="199" y="186"/>
<rect x="208" y="180" width="12" height="12" fill="#ccc"/><path d="M212,180V192M216,180V192M208,184H220M208,188H220" stroke="#333"/>
<rect x="225" y="180" width="15" height="12" fill="none" stroke="#ccc"/><path d="M225,183H240M225,189H240" stroke="#ccc"/>
<rect x="245" y="180" width="14" height="12" fill="none" stroke="#ccc"/><circle cx="252" cy="186" r="3" fill="#3fa5b0"/>
<circle cx="271" cy="186" r="4" fill="#555"/>
<rect x="283" y="180" width="14" height="12" fill="none" stroke="#ccc"/><path d="M290,180V192M283,186H297" stroke="#3fa5b0" stroke-dasharray="2 1"/>
<rect x="302" y="180" width="14" height="12" fill="none" stroke="#ccc"/><path d="M304,191L309,185L313,191Z" fill="#3fa5b0"/><circle cx="312" cy="184" r="2" fill="#ccc"/>
<rect x="321" y="180" width="14" height="12" fill="none" stroke="#ccc"/><text x="324" y="191" font-size="11" font-weight="bold" fill="#3fa5b0">T</text>
<use href="#sep" x="342" y="186"/>
<path d="M359,178L367,182V190L359,194L351,190V182ZM351,182L359,186L367,182M359,186V194" fill="none" stroke="#999"/>
<path d="M377,178L385,182V190L377,194L369,190V182Z" fill="#56c8d0" stroke="#ddd"/><path d="M369,182L377,186L385,182M377,186V194" fill="none" stroke="#ddd"/>
<circle cx="397" cy="186" r="7" fill="#ccc"/><path d="M397,179A7,7 0 0 1 397,193Z" fill="#888"/>
<path d="M415,178L423,182V190L415,194L407,190V182Z" fill="#777" stroke="#ccc"/><path d="M407,182L415,186L423,182M415,186V194" fill="none" stroke="#9ad"/>
<circle cx="434" cy="186" r="7" fill="#999"/><path d="M428,183H440M428,186H440M428,189H440" stroke="#444" stroke-dasharray="2 2" stroke-width="2"/>
<circle cx="453" cy="184" r="4" fill="#ddd"/><path d="M451,189H455V192H451ZM446,184H444M460,184H462M448,178L447,177M459,178L460,177" stroke="#ccc" fill="#ccc"/>
<circle cx="475" cy="185" r="5" fill="#3fa5b0"/><ellipse cx="467" cy="190" rx="4" ry="3" fill="#888"/>
<use href="#sep" x="487" y="186"/>
<circle cx="502" cy="184" r="5.500" fill="#ccc"/><path d="M495,191L502,188L509,191L502,195Z" fill="#3fa5b0"/>
<circle cx="516" cy="190" r="4" fill="#666"/><circle cx="522" cy="184" r="5" fill="#999"/>
<circle cx="540" cy="186" r="5.500" fill="none" stroke="#3fa5b0" stroke-width="2" stroke-dasharray="6 2"/>
<rect x="555" y="180" width="9" height="8" fill="#3a4b55"/><rect x="558" y="184" width="9" height="8" fill="#44575f"/>
<use href="#sep" x="573" y="186"/>
<rect x="583" y="180" width="9" height="9" fill="none" stroke="#3fa5b0" stroke-dasharray="2 1"/><use href="#arr" x="593" y="187"/>
<use href="#sep" x="603" y="186"/>
<rect x="615" y="183" width="8" height="8" fill="#ccc"/><rect x="619" y="180" width="8" height="8" fill="none" stroke="#ccc" stroke-width="1.500"/>
<rect x="633" y="183" width="8" height="8" fill="#ccc"/><path d="M636,183V180H644V188H641" fill="none" stroke="#ccc" stroke-width="1.500"/>
<rect x="651" y="180" width="12" height="12" fill="none" stroke="#ccc"/><path d="M653,182L661,190" stroke="#ccc" stroke-width="1.500"/>
<use href="#sep" x="671" y="186"/>
<circle cx="688" cy="186" r="6" fill="none" stroke="#ccc" stroke-width="3" stroke-dasharray="4 1"/>
<circle cx="750" cy="186" r="5" fill="#ccc"/><path d="M746,181A5,5 0 0 0 746,191H750V181Z" fill="#333"/>
<text x="804" y="189" font-size="7" fill="#ddd">ON</text>
<circle cx="810" cy="186" r="7" fill="none" stroke="#ddd"/>
<use href="#tri" x="950" y="186"/>

<!-- outliner icons -->
<path d="M1469,199H1480V216H1469ZM1465,204V211M1484,204V211" fill="none" stroke="#666" stroke-dasharray="3 2"/>
<path d="M1896,205H1908L1902,211Z" fill="#c8c8c8"/>
<use href="#cam" x="1503" y="229"/><use href="#cam" x="1503" y="249"/><use href="#cam" x="1503" y="269"/><use href="#cam" x="1503" y="289"/>
<use href="#box" x="1485.500" y="308.500"/><use href="#box" x="1497.500" y="329.500"/><use href="#boxp" x="1509.500" y="348.500"/><use href="#boxp" x="1485.500" y="408.500"/>
<path d="M1485.500,313V388.500H1493M1485.500,329.500H1493M1485.500,368.500H1493M1497.500,334V348.500H1505" stroke="#999" fill="none"/>
<circle cx="1496" cy="368.500" r="2.300" fill="#999"/><circle cx="1496" cy="388.500" r="2.300" fill="#999"/>
<use href="#xf" x="1502" y="309"/><use href="#xf" x="1514" y="329"/>
<path d="M1532,342L1523,349L1531,356" fill="none" stroke="#a99adf" stroke-width="2.500"/><circle cx="1532" cy="342" r="2" fill="#a99adf"/><circle cx="1523" cy="349" r="2" fill="#a99adf"/>
<use href="#mesh" x="1514" y="369"/><use href="#mesh" x="1515" y="389"/>
<use href="#set" x="1503" y="409"/><use href="#set" x="1503" y="429"/>
<path d="M1911,222L1906,227H1916ZM1906,459H1916L1911,464Z" fill="#aaa"/>
<path d="M1463,473L1468,469V479ZM1896,469L1901,474L1896,479Z" fill="#ccc"/>
<path d="M1612,482H1762" stroke="#777" stroke-dasharray="1 2"/>
<!-- AE icons -->
<path d="M1887,549L1882,554L1887,559Z" fill="#777"/><path d="M1899,549L1904,554L1899,559Z" fill="#ddd"/>
<path d="M1783,587H1797V598H1783Z" fill="none" stroke="#bbb"/><path d="M1782,590L1787,593L1782,596Z" fill="#ddd"/>
<path d="M1783,610H1795V621H1783Z" fill="none" stroke="#bbb"/><path d="M1794,612L1799,615L1794,618Z" fill="#ddd"/>
<path d="M1476,660H1486L1481,665Z" fill="#ddd"/>
<path d="M1903,656L1899,661H1907ZM1899,781H1907L1903,785Z" fill="#ccc"/>
<path d="M1667,771H1677L1672,776Z" fill="#c8c8c8"/>
<path d="M1612,797H1762" stroke="#777" stroke-dasharray="1 2"/>

<!-- graph editor icons -->
<path d="M8,936H26M17,927V947" stroke="#e0673a" stroke-width="1.500"/><path d="M19,927L24,931L19,934Z" fill="#ddd"/>
<path d="M38,927V947M44,927V947" stroke="#e0673a" stroke-width="1.500"/><path d="M33,937H49" stroke="#ccc"/>
<g fill="#e0673a"><rect x="60" y="929" width="4" height="4"/><rect x="66" y="929" width="4" height="4"/><rect x="72" y="929" width="4" height="4"/><rect x="60" y="935" width="4" height="4"/><rect x="72" y="935" width="4" height="4"/><rect x="60" y="941" width="4" height="4"/><rect x="66" y="941" width="4" height="4"/><rect x="72" y="941" width="4" height="4"/></g>
<rect x="85" y="929" width="12" height="12" fill="none" stroke="#e0673a" stroke-dasharray="2 1"/><use href="#arr" x="95" y="938"/>
<path d="M108,930H124M111,930V946M121,930V946" stroke="#e0673a" stroke-width="1.500"/><path d="M108,927H124" stroke="#ccc"/>
<rect x="130" y="925" width="1" height="24" fill="#666"/><rect x="361" y="925" width="1" height="24" fill="#666"/>
<path d="M369.500,930H384.500V945H369.500Z" fill="none" stroke="#e0673a" stroke-width="1.500"/>
<path d="M394,930H410V945H394ZM399,930V945M405,930V945" fill="none" stroke="#e0673a" stroke-width="1.300"/>
<path d="M419,930H435V945H419ZM427,926V949" fill="none" stroke="#e0673a" stroke-width="1.300"/>
<rect x="442" y="925" width="1" height="24" fill="#666"/>
<use href="#ot2" x="456" y="937"/><use href="#ot3" x="482" y="937"/><use href="#ot3" x="507" y="939"/>
<path d="M526,931L537,943" stroke="#e0673a" stroke-width="1.300"/><rect x="524" y="928" width="3" height="3" fill="none" stroke="#ddd"/>
<path d="M550,937H562" stroke="#e0673a" stroke-width="2"/><rect x="548" y="935" width="4" height="4" fill="#ddd"/><rect x="561" y="935" width="4" height="4" fill="#ddd"/>
<path d="M576,944H583V931H590" stroke="#e0673a" stroke-width="1.500" fill="none"/>
<path d="M600,944V931H612V944" stroke="#e0673a" stroke-width="1.500" fill="none"/><rect x="598" y="930" width="4" height="4" fill="#ddd"/><rect x="610" y="930" width="4" height="4" fill="#ddd"/>
<rect x="620" y="925" width="1" height="24" fill="#666"/>
<path d="M628,930C632,926 638,934 642,930M635,930V940M628,947C630,938 640,938 642,947" stroke="#e0673a" fill="none" stroke-width="1.300"/><path d="M631,938L635,942L639,938Z" fill="#ddd"/>
<path d="M653,930C657,926 663,934 667,930M660,930V940M653,947C655,938 665,938 667,947" stroke="#e0673a" fill="none" stroke-width="1.300"/><path d="M656,934L660,928L664,934Z" fill="#ddd"/>
<rect x="675" y="925" width="1" height="24" fill="#666"/>
<path d="M684,930L691,946L698,930" stroke="#e0673a" stroke-width="1.500" fill="none"/><rect x="683" y="928" width="3" height="3" fill="#ddd"/><rect x="697" y="928" width="3" height="3" fill="#ddd"/>
<path d="M708,932L722,946" stroke="#e0673a" stroke-width="1.300" stroke-dasharray="3 2"/><rect x="707" y="929" width="3" height="3" fill="#ddd"/>
<path d="M733,931L744,946M733,931H746" stroke="#e0673a" stroke-width="1.300" fill="none"/><rect x="745" y="928" width="4" height="4" fill="#ddd"/>
<path d="M758,931L772,946" stroke="#e0673a" stroke-width="1.300"/><rect x="769" y="928" width="5" height="5" fill="#ddd"/>
<use href="#wsq" x="793" y="937"/><circle cx="793" cy="939" r="4" fill="none" stroke="#444" stroke-width="1.500"/>
<g opacity=".45"><use href="#wsq" x="819" y="937"/></g>
<path d="M843,932A6,6 0 1 1 852,936V940" stroke="#ddd" stroke-width="2" fill="none"/><rect x="840" y="941" width="14" height="5" fill="#e0673a"/>
<path d="M866,935A5,5 0 1 1 875,938" stroke="#ddd" stroke-width="2" fill="none"/><path d="M878,930V946" stroke="#e0673a" stroke-dasharray="2 2" stroke-width="3"/>
<rect x="888" y="925" width="1" height="24" fill="#666"/>
<path d="M895,945L910,930M893,932L908,947" stroke="#e0673a"/><path d="M897,945H900" stroke="#ccc"/>
<path d="M919,945L934,930M919,930L934,945" stroke="#e0673a"/>
<path d="M944,945L958,930" stroke="#e0673a"/><path d="M943,934L958,946" stroke="#ccc"/><circle cx="957" cy="930" r="3" fill="none" stroke="#ccc"/>
<path d="M968,930V944H984M968,938L982,930" stroke="#ccc" fill="none"/><path d="M970,944L982,934" stroke="#e0673a"/>
<path d="M995,930V944H1009" stroke="#ccc" fill="none"/><path d="M996,932L1008,943M1008,932L996,943" stroke="#e0673a"/>
<rect x="1015" y="925" width="1" height="24" fill="#666"/>
<path d="M1024,946L1028,930M1032,946L1036,930" stroke="#ccc" fill="none"/><path d="M1024,946C1028,946 1032,930 1036,930" stroke="#e0673a" fill="none" stroke-dasharray="2 2"/>
<path d="M1049,946C1053,946 1057,932 1062,930" stroke="#ccc" fill="none"/><path d="M1052,942L1058,936" stroke="#e0673a" stroke-width="1.500"/>
<path d="M1074,946C1078,946 1080,930 1084,930M1082,946C1086,946 1088,930 1090,930" stroke="#e0673a" fill="none"/>
<path d="M1099,946C1103,946 1108,934 1113,930" stroke="#e0673a" stroke-width="1.500" fill="none"/><path d="M1108,934L1113,930" stroke="#ccc"/>
<rect x="1119" y="925" width="1" height="24" fill="#666"/>
<path d="M1831,927V947M1821,937H1841" stroke="#ccc"/><rect x="1827" y="934" width="7" height="6" fill="#e0673a"/><circle cx="1831" cy="929" r="1.500" fill="#ddd"/><circle cx="1831" cy="945" r="1.500" fill="#ddd"/><circle cx="1823" cy="937" r="1.500" fill="#ddd"/><circle cx="1840" cy="937" r="1.500" fill="#ddd"/>
<use href="#wsq" x="1856" y="937"/><path d="M1850,934V946M1853,934V946M1856,934V946M1859,934V946M1862,934V946M1849,940H1863" stroke="#333"/>
<use href="#wsq" x="1880" y="937"/><rect x="1875" y="933" width="10" height="5" fill="none" stroke="#333"/><rect x="1875" y="940" width="10" height="5" fill="none" stroke="#333"/>
<use href="#wsq" x="1904" y="937"/><circle cx="1904" cy="939" r="5" fill="#ddd" stroke="#333"/><path d="M1904,936V940" stroke="#333"/>

<path d="M13,958H9V975H13M26,958H30V975H26" fill="none" stroke="#666" stroke-dasharray="3 1.500"/>
<path d="M188,960H200L194,967Z" fill="#ccc"/>
<path d="M72,989H140" stroke="#777" stroke-dasharray="1 2"/>
<path d="M6,1005V1028M9,1005V1028" stroke="#666" stroke-dasharray="1 2"/>
<path d="M1338,1010V1022" stroke="#999" stroke-dasharray="1 2.500" stroke-width="1.500"/>
<rect x="1893" y="1006" width="19" height="22" fill="#bbb"/><rect x="1895" y="1011" width="15" height="15" fill="#444"/><text x="1896" y="1023" font-size="11" fill="#ddd">{;}</text>

<!-- timeline labels -->
<g font-size="10.500" fill="#8c8c8c">
<text x="238" y="962">-4</text><text x="300" y="962">-2</text><text x="423" y="962">2</text><text x="484" y="962">4</text><text x="546" y="962">6</text><text x="607" y="962">8</text><text x="669" y="962">10</text><text x="730" y="962">12</text><text x="792" y="962">14</text><text x="853" y="962">16</text><text x="915" y="962">18</text><text x="976" y="962">20</text><text x="1038" y="962">22</text><text x="1099" y="962">24</text><text x="1161" y="962">26</text><text x="1222" y="962">28</text><text x="1284" y="962">30</text><text x="1345" y="962">32</text><text x="1407" y="962">34</text><text x="1468" y="962">36</text><text x="1530" y="962">38</text><text x="1591" y="962">40</text><text x="1653" y="962">42</text><text x="1714" y="962">44</text><text x="1837" y="962" fill="#666">48</text><text x="1899" y="962" fill="#666">50</text>
</g>
<g font-size="12" fill="#777"><text x="239" y="980">0</text><text x="237" y="992">-2</text></g>
<path d="M1775,964H1785L1775,975Z" fill="#000"/>
<path d="M346,951H371V966L358.500,975L346,966Z" fill="#ffff00"/>
<path d="M358.500,975V994" stroke="#eee"/>
<text x="355" y="962" font-size="11" font-weight="bold" fill="#111">0</text>

<!-- view axis -->
<text x="72" y="836" font-size="12" font-weight="bold" fill="#0f0">y</text>
<text x="87" y="851" font-size="12" font-weight="bold" fill="#f00">x</text>
<text x="79" y="852" font-size="10" font-weight="bold" fill="#24f">z</text>
<path d="M75,840V854" stroke="#0f0"/><path d="M75,854H89" stroke="#f00"/><path d="M75,854L82,858" stroke="#24f"/>

<!-- M logo -->
<path d="M6,876V848L22,860L38,848V876H28V864L22,868L16,864V876Z" fill="url(#mlogo)"/>
<path d="M6,848L22,866L38,848L28,876L22,868L16,876Z" fill="#1b8e96" opacity=".5"/>

<!-- GUN -->
<g class="gun" transform="translate(340 360) scale(.4975 .3333)">
<defs>
<g id="ball" fill="none" stroke="#5dffb5" stroke-width=".8">
<ellipse rx="45" ry="60"/><ellipse rx="22" ry="58"/><ellipse rx="42" ry="16" cy="-22"/><ellipse rx="42" ry="16" cy="22"/>
<path d="M-45,0L0,-60L45,0L0,60Z"/>
</g>
</defs>
<!-- lower back pieces -->
<path d="M185,850L365,820L372,965L330,975L235,998L212,900Z" fill="#c9c9c9"/>
<path d="M312,820L318,975M330,830L334,975" stroke="#222" stroke-width="1" fill="none"/>
<path d="M192,880L222,885L222,905L190,900Z" fill="#bbb"/>
<path d="M318,970L372,955L372,968L330,975Z" fill="#aaa"/>
<path d="M905,800L960,770L1000,772L1028,825L1020,860L1005,890L1020,1000L1035,1015L1036,1075L975,1105L945,1040L935,940L915,890L908,850Z" fill="#cfcfcf"/>
<path d="M945,1040L975,1105L960,1095L935,960Z" fill="#b8b8b8"/>
<path d="M935,760L985,745L980,775L945,785Z" fill="#aaa"/>
<path d="M840,770L900,760L905,790L860,810Z" fill="#c6c6c6"/>
<!-- body -->
<path d="M380,300L400,255L760,205L790,165L860,145L920,150L985,190L1140,250L1200,240L1395,218L1415,240L1415,300L1460,400L1485,450L1395,540L1235,600L1228,690L1185,722L1165,700L1140,680L1000,700L960,750L880,770L800,750L760,730L600,740L400,600Z" fill="#d2d2d2" stroke="#d2d2d2" stroke-width="3" stroke-linejoin="round"/>
<path d="M400,255L760,205L775,225L425,280Z" fill="#c0c0c0"/>
<path d="M1200,240L1395,218L1410,290L1280,270L1140,280Z" fill="#c2c2c2"/>
<path d="M1140,680L1165,700L1185,722L1150,690Z" fill="#111"/>
<!-- ring -->
<path d="M700,540C700,340 780,195 880,180C990,175 1035,320 1020,470" stroke="#bcbcbc" stroke-width="10" fill="none"/>
<path d="M720,420C760,285 820,215 900,205C950,205 975,235 985,260" stroke="#111" stroke-width="2" fill="none"/>
<path d="M690,560C680,640 720,720 800,745C880,765 960,720 985,660" stroke="#b8b8b8" stroke-width="8" fill="none"/>
<!-- plate -->
<path d="M125,870L100,820L160,670L380,620L720,560L870,520L925,530L930,660L590,752L460,795Z" fill="#f6f6f6"/>
<path d="M125,855L460,780L465,793L125,870ZM590,745L920,660L925,672L600,755Z" fill="#0a0a0a"/>
<path d="M100,820L160,670L130,760L80,740L90,680L130,620L200,590L190,640Z" fill="#efefef"/>
<!-- strip -->
<path d="M350,385L950,262L955,335L690,350L350,425Z" fill="#ececec"/>
<!-- left beam -->
<path d="M60,325L110,312L190,345L190,420L75,465L48,420Z" fill="#f5f5f5"/>
<path d="M60,465L190,420L190,520L100,545Z" fill="#cbcbcb"/>
<!-- left plates -->
<path d="M172,232L262,218L280,270L300,640L218,672L195,480Z" fill="#cdcdcd"/>
<path d="M275,225L318,210L338,270L356,650L325,655L298,635L285,300Z" fill="#d8d8d8"/>
<path d="M280,290L298,630" stroke="#111" stroke-width="1.500"/>
<path d="M345,305L385,305L385,350L350,365Z" fill="#cfcfcf"/>
<!-- knobs -->
<ellipse cx="480" cy="322" rx="26" ry="42" fill="url(#knob)"/><ellipse cx="576" cy="310" rx="26" ry="42" fill="url(#knob)"/><ellipse cx="671" cy="295" rx="26" ry="42" fill="url(#knob)"/>
<!-- strap -->
<path d="M390,450L430,410L525,500L490,575L395,505Z" fill="#d5d5d5"/>
<path d="M430,445L520,520" stroke="#111" stroke-width="2"/>
<path d="M430,450L480,560" stroke="#aaa" stroke-width="2"/>
<!-- olive rod -->
<path d="M350,532L840,538" stroke="#a3a02a" stroke-width="2.500"/>
<!-- spheres -->
<ellipse cx="615" cy="490" rx="66" ry="92" fill="url(#sph)"/>
<path d="M555,540C575,595 640,595 668,550" stroke="#111" stroke-width="2" fill="none"/>
<ellipse cx="880" cy="500" rx="55" ry="90" fill="#d8d8d8"/>
<path d="M850,490L940,420L1000,570L940,640Z" fill="#c9c9c9"/>
<ellipse cx="930" cy="565" rx="55" ry="85" fill="url(#sph)"/>
<!-- grip mid -->
<path d="M420,600L500,650L590,740L580,830L582,1110L545,1130L520,1132L505,1095L500,860L465,790L425,680Z" fill="#cecece"/>
<path d="M430,620L500,670L580,745L500,690Z" fill="#b4b4b4"/>
<path d="M505,1095L520,1132L516,1000L500,860Z" fill="#bbb"/>
<path d="M655,730C760,720 840,600 870,520" stroke="#c4c4c4" stroke-width="6" fill="none"/>
<!-- right panels -->
<path d="M1172,310L1265,292L1282,310L1284,455L1225,490L1170,440L1155,420L1155,330Z" fill="#d7d7d7" stroke="#bbb"/>
<path d="M1300,290L1375,278L1392,300L1385,460L1295,475L1285,440Z" fill="#d7d7d7" stroke="#999"/>
<path d="M1310,300L1385,290" stroke="#111" stroke-width="1.500"/><path d="M1170,440L1215,452L1232,488L1265,482" stroke="#111" stroke-width="1.200" fill="none"/>
<path d="M1415,300L1460,400L1485,450L1395,540L1380,520L1395,470L1395,300Z" fill="#d6d6d6"/>
<path d="M1235,590L1300,510L1375,520L1240,600Z" fill="#f0f0f0"/>
<!-- big sphere -->
<ellipse cx="1060" cy="510" rx="75" ry="110" fill="#efefef"/>
<path d="M980,250L1130,190L1190,260L1130,370L990,370Z" fill="#e2e2e2"/>
<path d="M1105,210L1140,180L1165,210L1130,260Z" fill="#e8e8e8"/>
<path d="M1010,620C1030,640 1090,640 1120,590L1140,620C1100,670 1050,665 1015,640Z" fill="#bcbcbc"/>
<!-- wire -->
<g fill="none" stroke="#5dffb5" stroke-width=".9">
<path d="M60,325L110,312L190,345M60,325L48,420L60,470L100,548M60,325L75,465L190,420M130,430L75,465M130,430L110,312M130,430L190,400M100,548L190,520"/>
<path d="M350,385L950,262M350,395L950,275M350,405L950,288M350,415L700,340M350,425L950,315M700,345L955,335M600,370L950,262"/>
<path d="M125,870L100,820L160,670L380,620L720,560L870,520M100,820L125,870L460,790M590,752L930,660M160,670L450,780M160,670L130,760L80,740L90,680L130,620L200,590M80,740L120,640M140,600L200,620"/>
<path d="M350,610L720,535M600,590L550,680M720,560L560,700M600,700L750,560M835,530L745,680M740,620L880,530"/>
<path d="M980,250L1130,190L1190,260M980,250L1050,320L1130,250L1190,260M1050,320L1130,370L1190,260M1000,210L1050,320M1120,180L1050,320L1020,370M990,370L1050,320M950,300L1020,370L1000,210M960,290L1140,370M1010,190L1170,280"/>
<path d="M985,470A75,110 0 1 0 1135,470A75,110 0 1 0 985,470ZM1060,360L985,470L1060,500L1135,470ZM1060,500L1020,620M1060,500L1110,600M985,470L1010,600M1135,470L1115,600M1060,360V620M1040,380L1100,590M1080,380L1020,600"/>
<path d="M1130,400L1195,555M1135,450L1150,560M1150,490L1200,510M1000,620C1020,635 1080,640 1120,590M1010,630L1130,570"/>
<path d="M1010,300C980,180 1060,130 1100,180C1145,240 1130,330 1130,430M1030,300C1010,190 1050,160 1080,190C1110,230 1110,300 1115,400M1045,175L1060,250L1075,155L1095,215M1050,190L1085,195L1100,170"/>
<path d="M1235,600L1300,510L1385,530L1415,520L1480,450L1430,300L1395,540M1235,590L1375,520M1260,585L1310,525M1430,300L1380,500M1415,330L1470,450L1400,520M1440,400L1405,525M1235,555L1300,510"/>
<path d="M380,590L430,530M420,560L350,620M380,540L410,570M400,650L440,700M395,690L440,640"/>
</g>
<use href="#ball" x="262" y="725"/><use href="#ball" x="622" y="632"/><use href="#ball" x="792" y="600"/>
<!-- manipulator -->
<rect x="1286" y="352" width="41" height="60" fill="#8fc8e8" fill-opacity=".12" stroke="#7cc8f0" stroke-width="1"/>
<path d="M1308,322L1315,100" stroke="#0f0" stroke-width="1.500"/><path d="M1305,122L1318,50L1327,120Z" fill="#00e000"/>
<path d="M1340,372L1465,355" stroke="#f00" stroke-width="1.500"/><path d="M1456,342L1498,350L1460,368Z" fill="#b00000"/>
<path d="M1330,400L1398,465" stroke="#ff0" stroke-width="1.500"/><path d="M1392,450L1425,485L1395,478Z" fill="#e8e800"/>
<path d="M1418,145L1448,141L1446,188L1418,191Z" fill="#3c4aa0" stroke="#2030e0"/>
<path d="M1375,205L1395,218V265L1375,258Z" fill="#b86a6a" fill-opacity=".7" stroke="#e04040"/>
<path d="M1475,420L1505,408L1522,425L1490,430Z" fill="#3a8a2a" stroke="#20d020"/>
</g>

<!-- annotations -->
<ellipse cx="1109" cy="641" rx="11.500" ry="10" fill="#fff" transform="rotate(12 1109 641)"/>
<circle cx="1175" cy="632" r="9.300" fill="#fff"/>
<path d="M1103.500,737V728L1130,704C1140,696 1150,692 1170,688C1190,686 1200,691 1222,700" fill="none" stroke="#fff" stroke-width="17" stroke-linecap="round" stroke-linejoin="round"/>
<path d="M1208,783L1368,980" fill="none" stroke="#fff" stroke-width="12" stroke-linecap="round"/>
<path d="M1369,946L1371,982L1291,977" fill="none" stroke="#fff" stroke-width="12" stroke-linecap="round" stroke-linejoin="round"/>
</svg>
</div></body></html>
